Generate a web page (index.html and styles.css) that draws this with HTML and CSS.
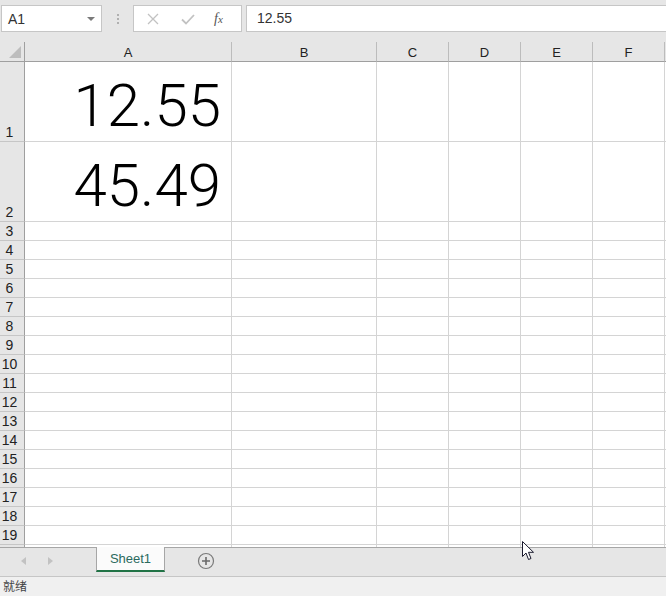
FILE: index.html
```html
<!DOCTYPE html>
<html lang="zh">
<head>
    <meta charset="UTF-8">
    <title>Book1 - Excel</title>
    <link rel="stylesheet" href="styles.css">
</head>
<body>
<div class="app">
    <!-- Formula bar -->
    <div class="toolbar">
        <div class="namebox">
            <span>A1</span>
            <span class="caret"></span>
        </div>
        <div class="grip"><i></i><i></i><i></i></div>
        <div class="fx-group">
            <svg class="tool-icon" width="14" height="14" viewBox="0 0 14 14">
                <path d="M2 2 L12 12 M12 2 L2 12" stroke="#c2c2c2" stroke-width="1.3" fill="none"/>
            </svg>
            <svg class="tool-icon" width="16" height="14" viewBox="0 0 16 14">
                <path d="M2 7.5 L6 11.5 L14 3" stroke="#c2c2c2" stroke-width="1.8" fill="none"/>
            </svg>
            <span class="fx">f<small>x</small></span>
        </div>
        <div class="formula">12.55</div>
    </div>

    <!-- Grid -->
    <div class="sheet">
        <div class="grid" id="grid">
            <div class="corner"><span class="corner-tri"></span></div>
            <div class="col-head">A</div>
            <div class="col-head">B</div>
            <div class="col-head">C</div>
            <div class="col-head">D</div>
            <div class="col-head">E</div>
            <div class="col-head">F</div>
            <div class="col-head"></div>

            <div class="row-head">1</div>
            <div class="cell value">12.55</div>
            <div class="cell"></div><div class="cell"></div><div class="cell"></div>
            <div class="cell"></div><div class="cell"></div><div class="cell"></div>

            <div class="row-head">2</div>
            <div class="cell value">45.49</div>
            <div class="cell"></div><div class="cell"></div><div class="cell"></div>
            <div class="cell"></div><div class="cell"></div><div class="cell"></div>
        </div>
    </div>

    <!-- Sheet tabs -->
    <div class="tabbar">
        <div class="tab-nav">
            <span class="nav-left"></span>
            <span class="nav-right"></span>
        </div>
        <div class="tab active">Sheet1</div>
        <svg class="add-sheet" width="18" height="18" viewBox="0 0 18 18">
            <circle cx="9" cy="9" r="7.5" fill="none" stroke="#7a7a7a" stroke-width="1.2"/>
            <path d="M9 5 V13 M5 9 H13" stroke="#6a6a6a" stroke-width="1.6"/>
        </svg>
    </div>

    <!-- Status bar -->
    <div class="statusbar">就绪</div>

    <!-- mouse pointer -->
    <svg class="pointer" width="14" height="20" viewBox="0 0 14 20">
        <path d="M0.5 0.5 L0.5 15.5 L4 12 L6.5 18.5 L9 17.5 L6.5 11.3 L11.5 11.3 Z" fill="#fff" stroke="#1a1a2e" stroke-width="1"/>
    </svg>
</div>
<script>
    // empty rows 3..20 (row 20 is only a sliver, no label)
    const grid = document.getElementById("grid");
    for (let r = 3; r <= 20; r++) {
        let html = `<div class="row-head">${r < 20 ? r : ""}</div>`;
        for (let c = 0; c < 7; c++) {
            html += `<div class="cell"></div>`;
        }
        grid.insertAdjacentHTML("beforeend", html);
    }
</script>
</body>
</html>
```

FILE: styles.css
```css
body {
    margin: 0;
    font-family: "Liberation Sans", Arial, "Noto Sans CJK SC", sans-serif;
    color: #222;
    overflow: hidden;
}

.app {
    width: 666px;
    height: 596px;
    display: flex;
    flex-direction: column;
    background: #e6e6e6;
    position: relative;
}

/* Formula bar */
.toolbar {
    height: 42px;
    flex-shrink: 0;
    display: flex;
    align-items: flex-start;
    padding-top: 5px;
    padding-left: 1px;
    box-sizing: border-box;
}
.namebox {
    width: 101px;
    height: 27px;
    box-sizing: border-box;
    background: #fff;
    border: 1px solid #c6c6c6;
    display: flex;
    align-items: center;
    justify-content: space-between;
    padding: 0 6px 0 6px;
    font-size: 14px;
    color: #333;
}
.caret {
    width: 0;
    height: 0;
    border-left: 4px solid transparent;
    border-right: 4px solid transparent;
    border-top: 4px solid #7a7a7a;
}
.grip {
    width: 31px;
    height: 27px;
    display: flex;
    flex-direction: column;
    align-items: center;
    justify-content: center;
    gap: 2px;
}
.grip i {
    width: 2px;
    height: 2px;
    background: #b0b0b0;
}
.fx-group {
    width: 109px;
    height: 27px;
    box-sizing: border-box;
    background: #fff;
    border: 1px solid #c6c6c6;
    display: flex;
    align-items: center;
    padding-left: 12px;
    gap: 20px;
}
.fx {
    font-family: "Liberation Serif", "DejaVu Serif", serif;
    font-style: italic;
    font-size: 14px;
    color: #555;
    margin-left: -2px;
}
.fx small {
    font-size: 11px;
}
.formula {
    flex: 1;
    height: 27px;
    box-sizing: border-box;
    margin-left: 4px;
    background: #fff;
    border: 1px solid #c6c6c6;
    border-right: none;
    font-size: 14px;
    color: #333;
    line-height: 25px;
    padding-left: 10px;
}

/* Grid */
.sheet {
    flex: 1;
    overflow: hidden;
    background: #fff;
}
.grid {
    display: grid;
    grid-template-columns: 25px 207px 145px 72px 72px 72px 72px 72px;
    grid-template-rows: 20px 80px 80px;
    grid-auto-rows: 19px;
}
.corner,
.col-head,
.row-head {
    background: #e6e6e6;
    box-sizing: border-box;
    font-size: 13px;
    color: #222;
}
.corner {
    border-right: 1px solid #9f9f9f;
    border-bottom: 1px solid #9f9f9f;
    position: relative;
}
.corner-tri {
    position: absolute;
    right: 3px;
    bottom: 3px;
    width: 0;
    height: 0;
    border-left: 12px solid transparent;
    border-bottom: 12px solid #bdbdbd;
}
.col-head {
    border-bottom: 1px solid #9f9f9f;
    border-right: 1px solid #bcbcbc;
    text-align: center;
    line-height: 20px;
    padding-top: 1px;
}
.row-head {
    border-right: 1px solid #9f9f9f;
    border-bottom: 1px solid #c6c6c6;
    display: flex;
    align-items: flex-end;
    justify-content: center;
    padding-right: 5px;
    line-height: 18px;
    font-size: 14px;
}
.cell {
    box-sizing: border-box;
    border-right: 1px solid #d4d4d4;
    border-bottom: 1px solid #d4d4d4;
}
.value {
    display: flex;
    align-items: flex-end;
    justify-content: flex-end;
    padding-right: 10px;
    font-family: Roboto, "Liberation Sans", sans-serif;
    font-weight: 300;
    font-size: 60px;
    color: #000;
}
.pointer {
    position: absolute;
    left: 522px;
    top: 541px;
}

/* Sheet tabs */
.tabbar {
    height: 29px;
    flex-shrink: 0;
    box-sizing: border-box;
    border-top: 1px solid #a6a6a6;
    display: flex;
    align-items: flex-start;
}
.tab-nav {
    width: 96px;
    height: 26px;
    display: flex;
    align-items: center;
    padding-left: 21px;
    gap: 22px;
    box-sizing: border-box;
}
.nav-left,
.nav-right {
    width: 0;
    height: 0;
    border-top: 4px solid transparent;
    border-bottom: 4px solid transparent;
}
.nav-left {
    border-right: 5px solid #c2c2c2;
}
.nav-right {
    border-left: 5px solid #c2c2c2;
}
.tab {
    width: 69px;
    height: 25px;
    box-sizing: border-box;
    margin-top: -1px;
    background: #fbfbfb;
    border-left: 1px solid #a6a6a6;
    border-right: 1px solid #a6a6a6;
    border-bottom: 2px solid #217346;
    font-size: 13px;
    text-align: center;
    line-height: 23px;
    color: #2b6a5e;
}
.add-sheet {
    margin-left: 32px;
    margin-top: 4px;
}

/* Status bar */
.statusbar {
    height: 20px;
    flex-shrink: 0;
    box-sizing: border-box;
    border-top: 1px solid #c6c6c6;
    background: #f0f0f0;
    font-family: "Noto Sans CJK SC", sans-serif;
    font-size: 12px;
    color: #444;
    padding-left: 3px;
    line-height: 18px;
}
```
